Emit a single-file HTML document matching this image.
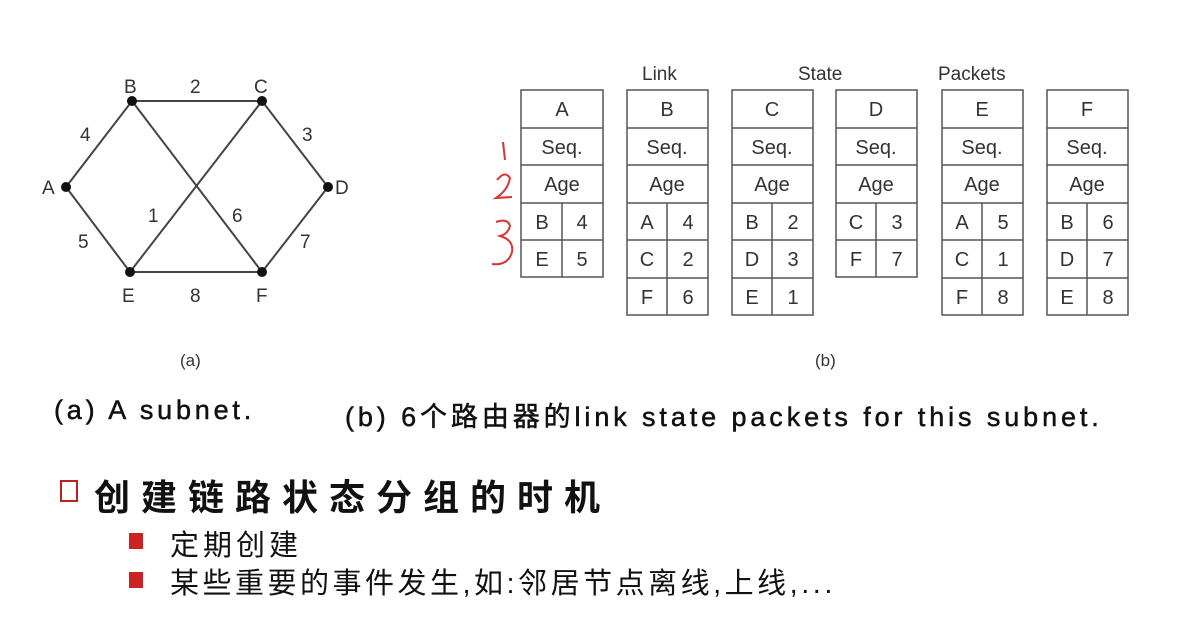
<!DOCTYPE html>
<html><head><meta charset="utf-8"><style>
body{margin:0;width:1194px;height:630px;background:#fff;overflow:hidden;position:relative;font-family:"Liberation Sans","Noto Sans CJK SC",sans-serif;color:#111}
.t{position:absolute;white-space:nowrap}
</style></head><body>
<svg width="1194" height="380" style="position:absolute;left:0;top:0" font-family="Liberation Sans, sans-serif" fill="#333">
<g stroke="#444" stroke-width="2">
<line x1="66" y1="187" x2="132" y2="101"/><line x1="132" y1="101" x2="262" y2="101"/>
<line x1="262" y1="101" x2="328" y2="187"/><line x1="328" y1="187" x2="262" y2="272"/>
<line x1="262" y1="272" x2="130" y2="272"/><line x1="130" y1="272" x2="66" y2="187"/>
<line x1="132" y1="101" x2="262" y2="272"/><line x1="262" y1="101" x2="130" y2="272"/>
</g>
<g fill="#111"><circle cx="66" cy="187" r="5"/><circle cx="132" cy="101" r="5"/><circle cx="262" cy="101" r="5"/><circle cx="328" cy="187" r="5"/><circle cx="130" cy="272" r="5"/><circle cx="262" cy="272" r="5"/></g>
<g font-size="19">
<text x="124" y="93">B</text><text x="254" y="93">C</text><text x="42" y="194">A</text><text x="335" y="194">D</text><text x="122" y="302">E</text><text x="256" y="302">F</text>
<text x="190" y="93">2</text><text x="80" y="141">4</text><text x="302" y="141">3</text><text x="78" y="248">5</text><text x="148" y="222">1</text><text x="232" y="222">6</text><text x="300" y="248">7</text><text x="190" y="302">8</text>
<text x="180" y="366" font-size="17">(a)</text><text x="815" y="366" font-size="17">(b)</text>
<text x="642" y="80">Link</text><text x="798" y="80">State</text><text x="938" y="80">Packets</text>
</g>
<g stroke="#555" stroke-width="1.5" fill="none">
<rect x="521" y="90" width="82" height="187"/><line x1="521" y1="128" x2="603" y2="128"/><line x1="521" y1="165" x2="603" y2="165"/><line x1="521" y1="203" x2="603" y2="203"/><line x1="521" y1="240" x2="603" y2="240"/><line x1="562" y1="203" x2="562" y2="277"/>
<rect x="627" y="90" width="81" height="225"/><line x1="627" y1="128" x2="708" y2="128"/><line x1="627" y1="165" x2="708" y2="165"/><line x1="627" y1="203" x2="708" y2="203"/><line x1="627" y1="240" x2="708" y2="240"/><line x1="627" y1="278" x2="708" y2="278"/><line x1="667" y1="203" x2="667" y2="315"/>
<rect x="732" y="90" width="81" height="225"/><line x1="732" y1="128" x2="813" y2="128"/><line x1="732" y1="165" x2="813" y2="165"/><line x1="732" y1="203" x2="813" y2="203"/><line x1="732" y1="240" x2="813" y2="240"/><line x1="732" y1="278" x2="813" y2="278"/><line x1="772" y1="203" x2="772" y2="315"/>
<rect x="836" y="90" width="81" height="187"/><line x1="836" y1="128" x2="917" y2="128"/><line x1="836" y1="165" x2="917" y2="165"/><line x1="836" y1="203" x2="917" y2="203"/><line x1="836" y1="240" x2="917" y2="240"/><line x1="876" y1="203" x2="876" y2="277"/>
<rect x="942" y="90" width="81" height="225"/><line x1="942" y1="128" x2="1023" y2="128"/><line x1="942" y1="165" x2="1023" y2="165"/><line x1="942" y1="203" x2="1023" y2="203"/><line x1="942" y1="240" x2="1023" y2="240"/><line x1="942" y1="278" x2="1023" y2="278"/><line x1="982" y1="203" x2="982" y2="315"/>
<rect x="1047" y="90" width="81" height="225"/><line x1="1047" y1="128" x2="1128" y2="128"/><line x1="1047" y1="165" x2="1128" y2="165"/><line x1="1047" y1="203" x2="1128" y2="203"/><line x1="1047" y1="240" x2="1128" y2="240"/><line x1="1047" y1="278" x2="1128" y2="278"/><line x1="1087" y1="203" x2="1087" y2="315"/>
</g>
<g font-size="20" text-anchor="middle">
<text x="562" y="116">A</text><text x="562" y="154">Seq.</text><text x="562" y="191">Age</text><text x="542" y="229">B</text><text x="582" y="229">4</text><text x="542" y="266">E</text><text x="582" y="266">5</text>
<text x="667" y="116">B</text><text x="667" y="154">Seq.</text><text x="667" y="191">Age</text><text x="647" y="229">A</text><text x="688" y="229">4</text><text x="647" y="266">C</text><text x="688" y="266">2</text><text x="647" y="304">F</text><text x="688" y="304">6</text>
<text x="772" y="116">C</text><text x="772" y="154">Seq.</text><text x="772" y="191">Age</text><text x="752" y="229">B</text><text x="793" y="229">2</text><text x="752" y="266">D</text><text x="793" y="266">3</text><text x="752" y="304">E</text><text x="793" y="304">1</text>
<text x="876" y="116">D</text><text x="876" y="154">Seq.</text><text x="876" y="191">Age</text><text x="856" y="229">C</text><text x="897" y="229">3</text><text x="856" y="266">F</text><text x="897" y="266">7</text>
<text x="982" y="116">E</text><text x="982" y="154">Seq.</text><text x="982" y="191">Age</text><text x="962" y="229">A</text><text x="1003" y="229">5</text><text x="962" y="266">C</text><text x="1003" y="266">1</text><text x="962" y="304">F</text><text x="1003" y="304">8</text>
<text x="1087" y="116">F</text><text x="1087" y="154">Seq.</text><text x="1087" y="191">Age</text><text x="1067" y="229">B</text><text x="1108" y="229">6</text><text x="1067" y="266">D</text><text x="1108" y="266">7</text><text x="1067" y="304">E</text><text x="1108" y="304">8</text>
</g>
<g stroke="#d33" stroke-width="2" fill="none">
<path d="M503 142 L505 160"/>
<path d="M497 180 Q505 170 510 178 Q508 190 496 198 L512 197"/>
<path d="M496 222 Q508 218 510 226 Q508 234 500 236 Q514 240 512 252 Q508 266 492 264"/>
</g>
</svg>
<div class="t" style="left:54px;top:395px;font-size:27px;letter-spacing:3.8px;-webkit-text-stroke:0.5px #111">(a) A subnet.</div>
<div class="t" style="left:345px;top:395px;font-size:27px;letter-spacing:3.9px;-webkit-text-stroke:0.5px #111">(b) 6个路由器的link state packets for this subnet.</div>
<div style="position:absolute;left:60px;top:480px;width:18px;height:22px;border:2.5px solid #b22;box-sizing:border-box"></div>
<div class="t" style="left:94px;top:469px;font-size:36px;font-weight:bold;letter-spacing:11px">创建链路状态分组的时机</div>
<div style="position:absolute;left:129px;top:533px;width:14px;height:16px;background:#c22"></div>
<div class="t" style="left:170px;top:522px;font-size:29px;letter-spacing:4px">定期创建</div>
<div style="position:absolute;left:129px;top:572px;width:14px;height:16px;background:#c22"></div>
<div class="t" style="left:170px;top:560px;font-size:29px;letter-spacing:3.5px">某些重要的事件发生,如:邻居节点离线,上线,...</div>
</body></html>
